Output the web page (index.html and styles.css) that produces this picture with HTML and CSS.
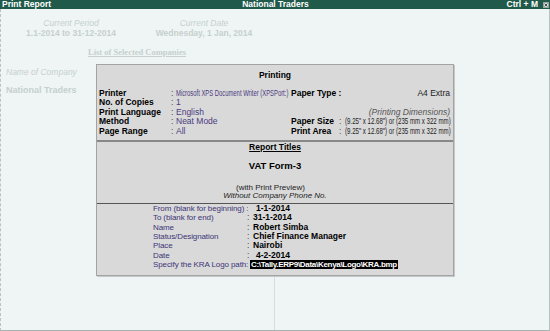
FILE: index.html
```html
<!DOCTYPE html>
<html lang="en">
  <head>
    <meta charset="UTF-8" />
    <title>Print Report</title>
    <link rel="stylesheet" href="styles.css">
  </head>
  <body>
    <div class="window">
      <div class="titlebar">
        <span class="tb-left">Print Report</span>
        <span class="tb-center">National Traders</span>
        <span class="tb-right">Ctrl + M
          <svg class="tb-close" width="6" height="6" viewBox="0 0 6 6">
            <rect x="0.5" y="0.5" width="5" height="5" fill="#d8dedc" stroke="#9aa6a3" stroke-width="1"/>
            <path d="M1.6 1.6 L4.4 4.4 M4.4 1.6 L1.6 4.4" stroke="#2a3a36" stroke-width="0.9"/>
          </svg>
        </span>
      </div>

      <div class="screen">
        <div class="info">
          <div class="info-col period">
            <div class="info-label">Current Period</div>
            <div class="info-value">1.1-2014 to 31-12-2014</div>
          </div>
          <div class="info-col date">
            <div class="info-label">Current Date</div>
            <div class="info-value">Wednesday, 1 Jan, 2014</div>
          </div>
        </div>
        <div class="companies-head">List of Selected Companies</div>
        <div class="companies">
          <div class="companies-left">
            <div class="company-label">Name of Company</div>
            <div class="company-name">National Traders</div>
          </div>
          <div class="companies-right"></div>
        </div>
      </div>

      <div class="dialog">
        <div class="dlg-head">Printing</div>
        <div class="print-grid">
          <div class="lbl">Printer</div>
          <div class="colon">:</div>
          <div class="val"><span class="narrow">Microsoft XPS Document Writer (XPSPort:)</span></div>
          <div class="lbl span2">Paper Type :</div>
          <div class="plain right">A4 Extra</div>

          <div class="lbl">No. of Copies</div>
          <div class="colon">:</div>
          <div class="val">1</div>
          <div class="span3"></div>

          <div class="lbl">Print Language</div>
          <div class="colon">:</div>
          <div class="val">English</div>
          <div class="note span3 right">(Printing Dimensions)</div>

          <div class="lbl">Method</div>
          <div class="colon">:</div>
          <div class="val">Neat Mode</div>
          <div class="lbl">Paper Size</div>
          <div class="colon">:</div>
          <div class="plain"><span class="narrow dims">(9.25" x 12.68") or (235 mm x 322 mm)</span></div>

          <div class="lbl">Page Range</div>
          <div class="colon">:</div>
          <div class="val">All</div>
          <div class="lbl">Print Area</div>
          <div class="colon">:</div>
          <div class="plain"><span class="narrow dims">(9.25" x 12.68") or (235 mm x 322 mm)</span></div>
        </div>

        <div class="sep-thick"></div>

        <div class="titles">
          <div class="titles-head">Report Titles</div>
          <div class="form-name">VAT Form-3</div>
          <div class="preview">(with Print Preview)</div>
          <div class="phone">Without Company Phone No.</div>
        </div>

        <div class="sep-thin"></div>

        <div class="form-grid">
          <div class="f-lbl span2">From (blank for beginning) :</div>
          <div class="f-val date-val">1-1-2014</div>

          <div class="f-lbl">To (blank for end)</div>
          <div class="colon">:</div>
          <div class="f-val">31-1-2014</div>

          <div class="f-lbl">Name</div>
          <div class="colon">:</div>
          <div class="f-val">Robert Simba</div>

          <div class="f-lbl">Status/Designation</div>
          <div class="colon">:</div>
          <div class="f-val">Chief Finance Manager</div>

          <div class="f-lbl">Place</div>
          <div class="colon">:</div>
          <div class="f-val">Nairobi</div>

          <div class="f-lbl">Date</div>
          <div class="colon">:</div>
          <div class="f-val date-val">4-2-2014</div>

          <div class="f-lbl span2">Specify the KRA Logo path:</div>
          <div class="f-val"><span class="path-box">C:\Tally.ERP9\Data\Kenya\Logo\KRA.bmp</span></div>
        </div>
      </div>
    </div>
  </body>
</html>
```

FILE: styles.css
```css
* {
  box-sizing: border-box;
}
body {
  margin: 0;
  font-family: "Liberation Sans", Arial, sans-serif;
  font-size: 8.5px;
  color: #000;
}
.window {
  position: relative;
  width: 550px;
  height: 331px;
  background-color: #eef5f4;
  display: flex;
  flex-direction: column;
  overflow: hidden;
}

/* title bar */
.titlebar {
  height: 9px;
  background-color: #1f5a4a;
  color: #fff;
  font-weight: bold;
  font-size: 8.5px;
  line-height: 9px;
  display: grid;
  grid-template-columns: 1fr auto 1fr;
  padding: 0 1px 0 2px;
}
.tb-right {
  justify-self: end;
  display: flex;
  align-items: center;
  gap: 5px;
}
.tb-close {
  display: block;
}

/* background screen */
.screen {
  flex: 1;
  display: flex;
  flex-direction: column;
  border-left: 1px dashed #b9c3c1;
  border-right: 1px solid #b9c3c1;
  border-bottom: 1px solid #a6b2b0;
  color: #c6d0ce;
}
.info {
  display: flex;
  padding-left: 5px;
  margin-top: 9px;
  line-height: 10px;
}
.info-col {
  text-align: center;
}
.info-col.period {
  width: 130px;
}
.info-col.date {
  width: 136px;
}
.info-label {
  font-style: italic;
}
.info-value {
  font-weight: bold;
}
.companies-head {
  align-self: flex-start;
  margin: 9px 0 0 87px;
  font-family: "Liberation Serif", "Times New Roman", serif;
  font-weight: bold;
  font-size: 8.5px;
  line-height: 10px;
  text-decoration: underline;
}
.companies {
  flex: 1;
  display: grid;
  grid-template-columns: 273px 1fr;
  margin-top: 10px;
}
.companies-left {
  padding-left: 5px;
  line-height: 10px;
}
.company-label {
  font-style: italic;
}
.company-name {
  margin-top: 8px;
  font-weight: bold;
  font-size: 9px;
}
.companies-right {
  border-left: 1px solid #d5dedc;
}

/* print dialog */
.dialog {
  position: absolute;
  left: 96px;
  top: 64px;
  width: 358px;
  height: 212px;
  background-color: #d9d9d9;
  border: 1px solid #a3a3a3;
  box-shadow: 1px 1px 0 #c4c9c8;
}
.dlg-head {
  margin-top: 5px;
  text-align: center;
  font-weight: bold;
  line-height: 10px;
}
.print-grid {
  display: grid;
  grid-template-columns: 72px 5px 115px 48px 6px minmax(0, 1fr);
  margin-top: 8.5px;
  padding: 0 3px 0 2px;
  line-height: 9.5px;
  white-space: nowrap;
}
.print-grid > div {
  min-width: 0;
}
.lbl {
  font-weight: bold;
}
.colon {
  color: #444;
}
.val {
  color: #4a3b82;
}
.plain {
  color: #222;
}
.note {
  font-style: italic;
  color: #555;
}
.right {
  text-align: right;
}
.span2 {
  grid-column: span 2;
}
.span3 {
  grid-column: span 3;
}
.narrow {
  display: inline-block;
  transform: scaleX(0.69);
  transform-origin: left center;
}
.narrow.dims {
  transform: scaleX(0.72);
}
.sep-thick {
  height: 2px;
  margin-top: 4px;
  background-color: #888;
}
.titles {
  text-align: center;
  color: #222;
}
.titles-head {
  font-weight: bold;
  color: #000;
  line-height: 10px;
  text-decoration: underline;
}
.form-name {
  margin-top: 9px;
  font-weight: bold;
  font-size: 9.5px;
  line-height: 10px;
  color: #000;
}
.preview {
  margin-top: 13px;
  padding-right: 9px;
  font-size: 8px;
  line-height: 8px;
}
.phone {
  font-style: italic;
  font-size: 8px;
  line-height: 8px;
}
.sep-thin {
  height: 1px;
  margin-top: 3px;
  background-color: #555;
}
.form-grid {
  display: grid;
  grid-template-columns: 94px 6px 1fr;
  padding-left: 56px;
  line-height: 9.33px;
  white-space: nowrap;
}
.f-lbl {
  color: #3d3578;
  font-size: 8px;
  letter-spacing: -0.1px;
}
.f-val {
  font-weight: bold;
}
.date-val {
  padding-left: 3px;
}
.path-box {
  display: inline-block;
  margin-left: -3px;
  padding: 0 1px;
  background-color: #000;
  color: #fff;
  font-size: 8px;
  letter-spacing: -0.3px;
  line-height: 9px;
}
```
